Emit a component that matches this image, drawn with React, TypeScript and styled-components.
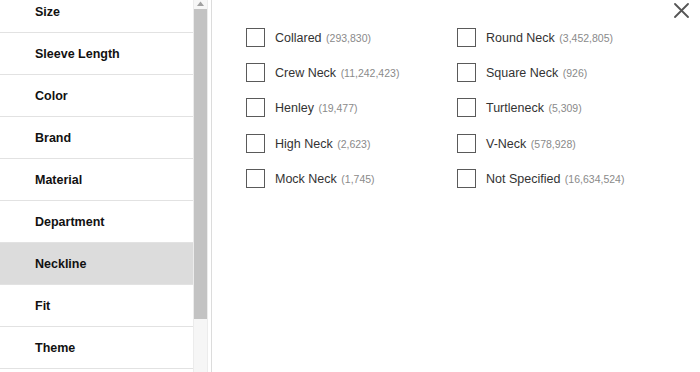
import React from "react";
import styled, { createGlobalStyle } from "styled-components";

const Global = createGlobalStyle`
  html, body { margin: 0; padding: 0; background: #fff; }
  body { width: 700px; height: 372px; overflow: hidden; }
  #root { width: 700px; height: 372px; }
`;

const Page = styled.div`
  display: flex;
  width: 700px;
  height: 372px;
  overflow: hidden;
  background: #fff;
  font-family: "Liberation Sans", Arial, sans-serif;
`;

const Sidebar = styled.aside`
  display: flex;
  flex: 0 0 auto;
  height: 100%;
  border-right: 1px solid #dcdcdc;
  padding-right: 3px;
`;

const Viewport = styled.div`
  width: 193px;
  height: 100%;
  overflow: hidden;
`;

const List = styled.ul`
  list-style: none;
  margin: -9px 0 0 0;
  padding: 0;
`;

const Item = styled.li<{ $active?: boolean }>`
  display: flex;
  align-items: center;
  height: 41px;
  padding-left: 35px;
  border-bottom: 1px solid #e2e2e2;
  background: ${(p) => (p.$active ? "#dcdcdc" : "#fff")};
  font-size: 12.5px;
  font-weight: bold;
  color: #111;
`;

const Track = styled.div`
  display: flex;
  flex-direction: column;
  width: 13px;
  height: 100%;
  background: #f6f6f6;
  border-left: 1px solid #ececec;
  border-right: 1px solid #ececec;
`;

const Arrow = styled.div`
  height: 9px;
  display: flex;
  justify-content: center;
  align-items: flex-start;
  padding-top: 1px;
  box-sizing: border-box;
`;

const Thumb = styled.div`
  height: 310px;
  background: #c3c3c3;
`;

const Main = styled.main`
  position: relative;
  flex: 1;
  padding: 28px 0 0 34px;
`;

const Grid = styled.div`
  display: grid;
  grid-auto-flow: column;
  grid-template-rows: repeat(5, 35.2px);
  grid-template-columns: 211px 211px;
`;

const Option = styled.label`
  display: flex;
  align-items: flex-start;
  gap: 10px;
  cursor: pointer;
`;

const Box = styled.span`
  flex: 0 0 auto;
  width: 17px;
  height: 17px;
  border: 1px solid #5a5a5a;
  background: #fff;
`;

const Name = styled.span`
  font-size: 12.5px;
  color: #333;
  line-height: 20px;
  white-space: nowrap;
`;

const Count = styled.span`
  margin-left: 4.5px;
  font-size: 10.5px;
  color: #8a8a8a;
`;

const Close = styled.button`
  position: absolute;
  top: 2px;
  right: 11px;
  width: 16px;
  height: 16px;
  padding: 0;
  border: 0;
  background: transparent;
  display: flex;
  align-items: center;
  justify-content: center;
  cursor: pointer;
`;

const categories = [
  "Size",
  "Sleeve Length",
  "Color",
  "Brand",
  "Material",
  "Department",
  "Neckline",
  "Fit",
  "Theme",
];

const options: [string, string][] = [
  ["Collared", "(293,830)"],
  ["Crew Neck", "(11,242,423)"],
  ["Henley", "(19,477)"],
  ["High Neck", "(2,623)"],
  ["Mock Neck", "(1,745)"],
  ["Round Neck", "(3,452,805)"],
  ["Square Neck", "(926)"],
  ["Turtleneck", "(5,309)"],
  ["V-Neck", "(578,928)"],
  ["Not Specified", "(16,634,524)"],
];

export default function App() {
  return (
    <>
      <Global />
      <Page>
        <Sidebar>
          <Viewport>
            <List>
              {categories.map((c) => (
                <Item key={c} $active={c === "Neckline"}>
                  {c}
                </Item>
              ))}
            </List>
          </Viewport>
          <Track>
            <Arrow>
              <svg width="7" height="5" viewBox="0 0 7 5">
                <path d="M0 5 L3.5 0.5 L7 5 Z" fill="#a0a0a0" />
              </svg>
            </Arrow>
            <Thumb />
          </Track>
        </Sidebar>
        <Main>
          <Close aria-label="Close">
            <svg width="15" height="15" viewBox="0 0 15 15">
              <path d="M1 1 L14 14 M14 1 L1 14" stroke="#555" strokeWidth="1.8" strokeLinecap="round" />
            </svg>
          </Close>
          <Grid>
            {options.map(([n, c]) => (
              <Option key={n}>
                <Box />
                <Name>
                  {n}
                  <Count>{c}</Count>
                </Name>
              </Option>
            ))}
          </Grid>
        </Main>
      </Page>
    </>
  );
}
